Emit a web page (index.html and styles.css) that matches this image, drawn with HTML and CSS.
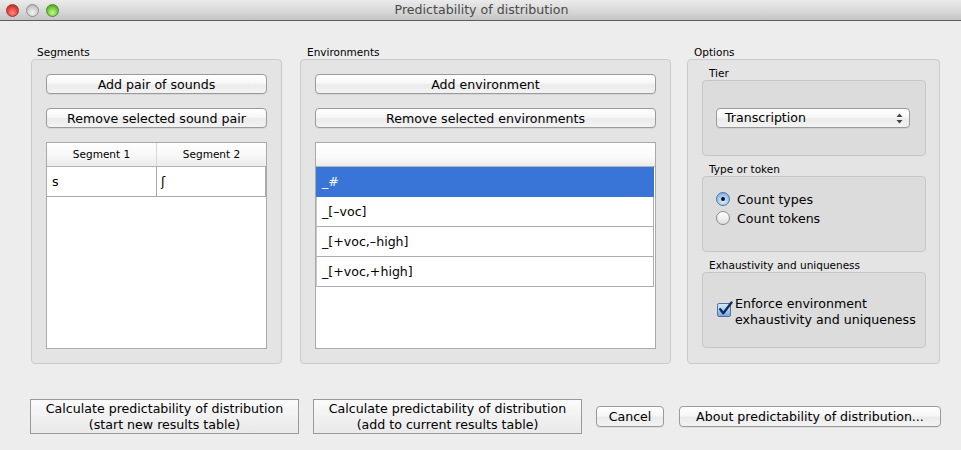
FILE: index.html
```html
<!DOCTYPE html>
<html>
<head>
<meta charset="utf-8">
<link rel="stylesheet" href="styles.css">
</head>
<body>
<div class="titlebar">
  <div class="lights">
    <span class="light red"></span>
    <span class="light grey"></span>
    <span class="light green"></span>
  </div>
  <div class="title">Predictability of distribution</div>
</div>
<div class="content">
  <div class="panels">
    <section class="col col-seg">
      <div class="grp-label">Segments</div>
      <div class="grp">
        <div class="btn">Add pair of sounds</div>
        <div class="btn">Remove selected sound pair</div>
        <div class="table">
          <div class="thead">
            <div class="th">Segment 1</div>
            <div class="th">Segment 2</div>
          </div>
          <div class="trow">
            <div class="td">s</div>
            <div class="td">ʃ</div>
          </div>
        </div>
      </div>
    </section>
    <section class="col col-env">
      <div class="grp-label">Environments</div>
      <div class="grp">
        <div class="btn">Add environment</div>
        <div class="btn">Remove selected environments</div>
        <div class="list">
          <div class="list-head"></div>
          <div class="lrow selected">_#</div>
          <div class="lrow">_[–voc]</div>
          <div class="lrow">_[+voc,–high]</div>
          <div class="lrow">_[+voc,+high]</div>
        </div>
      </div>
    </section>
    <section class="col col-opt">
      <div class="grp-label">Options</div>
      <div class="grp grp-opt">
        <div class="sub-label">Tier</div>
        <div class="sub sub-tier">
          <div class="select">
            <span>Transcription</span>
            <svg class="arrows" width="7" height="11" viewBox="0 0 7 11"><path d="M3.5 0.5 L6.5 4 L0.5 4 Z" fill="#444"/><path d="M3.5 10.5 L6.5 7 L0.5 7 Z" fill="#444"/></svg>
          </div>
        </div>
        <div class="sub-label">Type or token</div>
        <div class="sub sub-radio">
          <div class="radio-row"><span class="radio on"></span><span>Count types</span></div>
          <div class="radio-row"><span class="radio"></span><span>Count tokens</span></div>
        </div>
        <div class="sub-label">Exhaustivity and uniqueness</div>
        <div class="sub sub-check">
          <span class="check">
            <svg width="16" height="16" viewBox="0 0 16 16"><path d="M3.2 8.2 L6.3 12.2 L14.5 1.5" fill="none" stroke="#0f2a56" stroke-width="2.3" stroke-linecap="round" stroke-linejoin="round"/></svg>
          </span>
          <span class="check-text">Enforce environment<br>exhaustivity and uniqueness</span>
        </div>
      </div>
    </section>
  </div>
  <div class="actions">
    <div class="sq-btn sq-1">Calculate predictability of distribution<br>(start new results table)</div>
    <div class="sq-btn sq-2">Calculate predictability of distribution<br>(add to current results table)</div>
    <div class="btn btn-cancel">Cancel</div>
    <div class="btn btn-about">About predictability of distribution...</div>
  </div>
</div>
</body>
</html>
```

FILE: styles.css
```css
* { box-sizing: border-box; }
html, body {
  margin: 0;
  padding: 0;
  width: 961px;
  height: 450px;
  overflow: hidden;
  background: #ededed;
  font-family: "DejaVu Sans", "Liberation Sans", sans-serif;
  font-size: 12.6px;
  color: #000;
}
.titlebar {
  height: 21px;
  border-bottom: 1px solid #5e5e5e;
  background: linear-gradient(#ebebeb, #d6d6d6 60%, #c4c4c4);
  display: flex;
  align-items: center;
  justify-content: center;
}
.lights {
  position: absolute;
  left: 6px;
  top: 4px;
  display: flex;
  gap: 7px;
}
.light {
  width: 13px;
  height: 13px;
  border-radius: 50%;
  display: block;
}
.light.red { background: radial-gradient(circle at 50% 70%, #ff8a80, #e0443c 55%, #a8231f); border: 1px solid #9c3630; }
.light.grey { background: radial-gradient(circle at 50% 70%, #f4f4f4, #cfcfcf 55%, #a9a9a9); border: 1px solid #8f8f8f; }
.light.green { background: radial-gradient(circle at 50% 70%, #c8f59a, #6fc93b 55%, #3c8d1a); border: 1px solid #4b8a2c; }
.title {
  font-size: 12.6px;
  color: #4a4a4a;
  line-height: 20px;
  padding-left: 2px;
}
.content { padding-top: 24px; }
.panels {
  display: flex;
  padding-left: 31px;
}
.col-seg { width: 251px; margin-right: 18px; }
.col-env { width: 371px; margin-right: 16px; }
.col-opt { width: 253px; }
.grp-label {
  font-size: 10.5px;
  height: 14px;
  line-height: 14px;
  padding-left: 6px;
}
.col-env .grp-label, .col-opt .grp-label { padding-left: 7px; }
.grp {
  height: 305px;
  background: #e4e4e4;
  border: 1px solid #cacaca;
  border-radius: 4px;
  padding: 14px 14px 14px 14px;
  display: flex;
  flex-direction: column;
  gap: 14px;
}
.btn {
  height: 20px;
  border: 1px solid #9a9a9a;
  border-radius: 4px;
  background: linear-gradient(#ffffff, #f7f7f7 45%, #ebebeb 55%, #f3f3f3);
  box-shadow: 0 1px 0 rgba(0,0,0,0.06);
  text-align: center;
  line-height: 19px;
  white-space: nowrap;
}
.table {
  flex: 1;
  background: #fff;
  border: 1px solid #a9a9a9;
}
.thead {
  display: flex;
  height: 24px;
  border-bottom: 1px solid #b4b4b4;
  background: linear-gradient(#ffffff, #f6f6f6 60%, #ebebeb);
}
.th {
  width: 50%;
  font-size: 10.5px;
  text-align: center;
  line-height: 23px;
}
.th:first-child { border-right: 1px solid #d8d8d8; width: 110px; }
.th:last-child { flex: 1; }
.trow {
  display: flex;
  height: 30px;
  border-bottom: 1px solid #a8a8a8;
}
.td {
  line-height: 29px;
  padding-left: 5px;
}
.td:first-child { width: 110px; border-right: 1px solid #a8a8a8; }
.td:last-child { flex: 1; border-right: 1px solid #a8a8a8; padding-left: 4px; }
.list {
  flex: 1;
  background: #fff;
  border: 1px solid #a9a9a9;
}
.list-head {
  height: 24px;
  border-bottom: 1px solid #b4b4b4;
  background: linear-gradient(#ffffff, #fafafa 60%, #ececec);
}
.lrow {
  height: 30px;
  line-height: 29px;
  padding-left: 5px;
  margin-right: 1px;
  border-bottom: 1px solid #acacac;
  border-right: 1px solid #acacac;
  border-left: 1px solid #c8c8c8;
}
.lrow.selected {
  background: #3875d7;
  color: #fff;
  border-color: #3875d7;
}
.grp-opt {
  padding: 6px 13px 14px 14px;
  gap: 0;
}
.sub-label {
  font-size: 10.5px;
  height: 14px;
  line-height: 14px;
  padding-left: 7px;
}
.sub + .sub-label { margin-top: 6px; }
.sub {
  height: 76px;
  background: #dcdcdc;
  border: 1px solid #c6c6c6;
  border-radius: 4px;
}
.sub-tier {
  display: flex;
  align-items: center;
  padding: 0 15px 0 13px;
}
.select {
  flex: 1;
  height: 20px;
  border: 1px solid #9a9a9a;
  border-radius: 4px;
  background: linear-gradient(#ffffff, #f7f7f7 45%, #ebebeb 55%, #f3f3f3);
  box-shadow: 0 1px 0 rgba(0,0,0,0.06);
  display: flex;
  align-items: center;
  justify-content: space-between;
  padding: 0 6px 0 8px;
  line-height: 18px;
}
.arrows { display: block; }
.sub-radio {
  padding: 15px 0 0 13px;
  display: flex;
  flex-direction: column;
  gap: 5px;
}
.radio-row {
  display: flex;
  align-items: center;
  gap: 7px;
  height: 14px;
}
.radio {
  width: 14px;
  height: 14px;
  border-radius: 50%;
  border: 1px solid #8a8a8a;
  background: linear-gradient(#ffffff, #f0f0f0 50%, #dedede);
  position: relative;
  flex: none;
}
.radio.on {
  border-color: #53729f;
  background: radial-gradient(circle at 50% 70%, #d9ecff, #9cc3ee 60%, #6f9fd8);
}
.radio.on::after {
  content: "";
  position: absolute;
  left: 4px;
  top: 4px;
  width: 4px;
  height: 4px;
  border-radius: 50%;
  background: #111;
}
.sub-check {
  display: flex;
  align-items: center;
  padding-left: 14px;
}
.check {
  width: 14px;
  height: 14px;
  border: 1px solid #53729f;
  border-radius: 2px;
  background: linear-gradient(#d6e9ff, #a5c8ef 55%, #7aa6dc);
  position: relative;
  flex: none;
}
.check svg {
  position: absolute;
  left: -1px;
  top: -3px;
}
.check-text {
  line-height: 16px;
  padding-left: 4px;
  padding-top: 4px;
}
.actions {
  display: flex;
  align-items: center;
  padding-left: 30px;
  margin-top: 35px;
}
.sq-btn {
  width: 269px;
  height: 35px;
  border: 1px solid #999;
  background: linear-gradient(#fbfbfb, #f1f1f1 50%, #e9e9e9);
  text-align: center;
  line-height: 16px;
  padding-top: 1px;
}
.sq-1 { margin-right: 14px; }
.sq-2 { margin-right: 14px; }
.btn-cancel { width: 68px; height: 21px; margin-right: 15px; line-height: 20px; }
.btn-about { width: 262px; height: 21px; line-height: 20px; }
```
